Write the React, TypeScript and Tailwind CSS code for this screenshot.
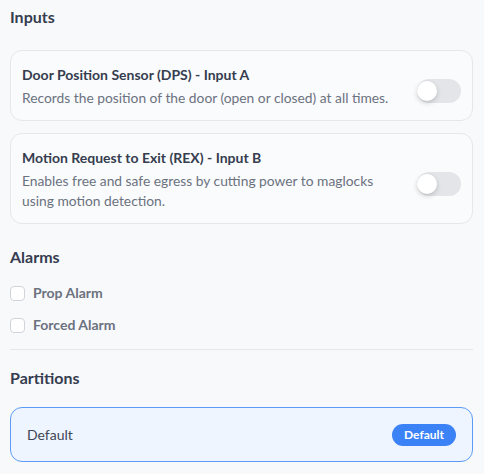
import * as React from 'react';

interface InputRow {
  title: string;
  description: string;
}

const inputs: InputRow[] = [
  {
    title: 'Door Position Sensor (DPS) - Input A',
    description: 'Records the position of the door (open or closed) at all times.',
  },
  {
    title: 'Motion Request to Exit (REX) - Input B',
    description: 'Enables free and safe egress by cutting power to maglocks using motion detection.',
  },
];

const alarms = ['Prop Alarm', 'Forced Alarm'];

const Toggle: React.FC = () => (
  <div className="mt-2 relative h-6 w-11 shrink-0 rounded-full bg-[#e4e5e9]">
    <div className="absolute left-0 top-[2px] h-5 w-5 rounded-full bg-white shadow-[0_2px_5px_rgba(0,0,0,0.18)]" />
  </div>
);

export default function App() {
  return (
    <div
      className="h-screen w-full bg-[#f8f9fb] pl-[10px] pr-[11px] text-[#353d4f]"
      style={{ fontFamily: 'Lato, "Open Sans", sans-serif' }}
    >
      <h2 className="pt-[5px] text-base font-bold leading-6">Inputs</h2>

      <div className="mt-[21px] flex flex-col gap-3">
        {inputs.map((row) => (
          <div
            key={row.title}
            className="flex items-center gap-4 rounded-xl border border-[#e5e7eb] bg-[#fafbfc] pl-[11px] pr-[11px] pt-[14px] pb-[12px]"
          >
            <div className="flex-1">
              <div className="text-sm font-bold leading-5">{row.title}</div>
              <div className="mt-[3px] text-[13.8px] leading-5 text-[#6b7280]">{row.description}</div>
            </div>
            <Toggle />
          </div>
        ))}
      </div>

      <h2 className="mt-[21px] text-base font-bold leading-6">Alarms</h2>

      <div className="mt-[14px] flex flex-col gap-3">
        {alarms.map((a) => (
          <label key={a} className="flex h-5 items-center gap-2">
            <span className="h-[15px] w-[15px] rounded-[4px] border border-[#d1d5db] bg-white" />
            <span className="text-sm font-bold text-[#6b7280]">{a}</span>
          </label>
        ))}
      </div>

      <div className="mt-[14px] border-t border-[#e5e7eb]" />

      <h2 className="mt-[16px] text-base font-bold leading-6">Partitions</h2>

      <div className="mt-[17px] flex h-[55px] items-center justify-between rounded-xl border border-[#5b9bf5] bg-[#eef5ff] px-4">
        <span className="text-sm text-[#3f4656]">Default</span>
        <span className="inline-flex h-[22px] items-center rounded-full bg-[#3b82f6] px-3 text-xs font-bold text-white">
          Default
        </span>
      </div>
    </div>
  );
}
